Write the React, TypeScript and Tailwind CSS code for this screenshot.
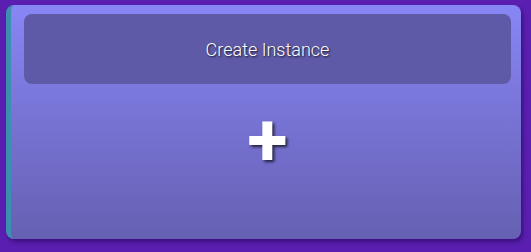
import React from "react";

export default function App() {
  return (
    <div className="w-[531px] h-[252px] bg-[#5a1fb0] pt-[5px] pl-[6px] font-['Roboto',sans-serif]">
      <div className="w-[515px] h-[234px] rounded-lg border-l-[5px] border-[#3d8fb0] bg-gradient-to-b from-[#8886f6] to-[#6660b2] shadow-[2px_3px_4px_rgba(30,0,80,0.5)] pt-[9px] pl-[13px] pr-[10px] flex flex-col">
        <button className="h-[70px] w-full rounded-lg bg-[#5e5aa8] text-white text-[18px] font-light [text-shadow:1px_1px_2px_rgba(0,0,0,0.8)]">
          Create Instance
        </button>
        <div className="flex-1 flex items-center justify-center pb-[44px]">
          <span className="text-white font-bold text-[74px] leading-none [text-shadow:2px_2px_3px_rgba(0,0,0,0.7)]">
            +
          </span>
        </div>
      </div>
    </div>
  );
}
